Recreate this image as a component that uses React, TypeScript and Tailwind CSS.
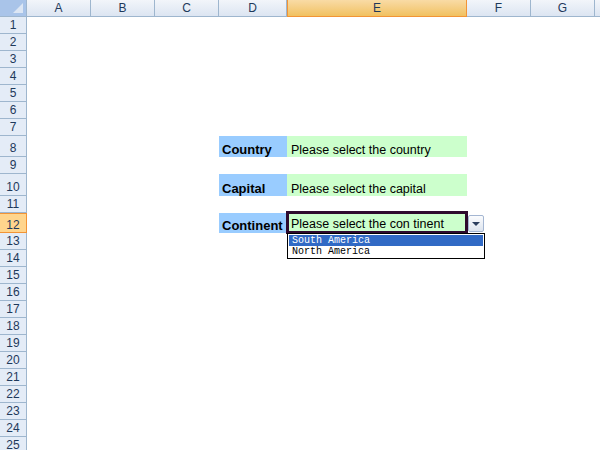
import React from 'react';

const cols = ['A', 'B', 'C', 'D', 'E', 'F', 'G', ''];
const colWidths = [64, 64, 64, 68, 180, 64, 64, 64];
const rowHeights: Record<number, number> = { 8: 21, 10: 22, 12: 20 };
const rows = Array.from({ length: 26 }, (_, i) => i + 1);

function LabelCell({ text }: { text: string }) {
  return (
    <div className="flex h-full items-end bg-[#99CCFF] pb-[1px] pl-[3px] text-[13px] font-bold leading-none text-black">
      {text}
    </div>
  );
}

function ValueCell({ text }: { text: string }) {
  return (
    <div className="flex h-full items-end bg-[#CCFFCC] pb-[1px] pl-[4px] text-[12.5px] leading-none text-black">
      {text}
    </div>
  );
}

export default function App() {
  return (
    <div
      className="relative h-[450px] w-[600px] overflow-hidden bg-white"
      style={{ fontFamily: '"Liberation Sans", Tahoma, sans-serif' }}
    >
      {/* Column header */}
      <div className="flex h-[17px]">
        <div className="relative w-[27px] shrink-0 border-r border-b border-[#9EB6CE] bg-[#A9C4E9]">
          <svg className="absolute right-[3px] bottom-[3px]" width="10" height="10" viewBox="0 0 10 10">
            <polygon points="10,0 10,10 0,10" fill="#DCE6F4" />
          </svg>
        </div>
        {cols.map((c, i) => (
          <div
            key={i}
            style={{ width: colWidths[i] }}
            className={
              c === 'E'
                ? 'flex shrink-0 items-center justify-center border-x border-b border-[#F29436] bg-gradient-to-b from-[#F9DBA5] to-[#F1C15F] text-[12px] text-[#1E395B]'
                : 'flex shrink-0 items-center justify-center border-r border-b border-[#9EB6CE] bg-gradient-to-b from-[#F2F5FA] to-[#DCE5F2] text-[12px] text-[#1E395B]'
            }
          >
            {c}
          </div>
        ))}
      </div>

      {/* Rows */}
      {rows.map((r) => (
        <div key={r} className="flex" style={{ height: rowHeights[r] ?? 17 }}>
          <div
            className={
              r === 12
                ? 'flex w-[27px] shrink-0 items-end justify-center border-y border-r border-[#F29436] bg-[#FFD58D] pb-[1px] text-[12px] leading-none text-[#1E395B]'
                : 'flex w-[27px] shrink-0 items-end justify-center border-r border-b border-[#9EB6CE] bg-[#E4ECF7] pb-[2px] text-[12px] leading-none text-[#1E395B]'
            }
          >
            {r}
          </div>
          <div className="w-[192px] shrink-0" />
          <div className="w-[68px] shrink-0">
            {r === 8 && <LabelCell text="Country" />}
            {r === 10 && <LabelCell text="Capital" />}
            {r === 12 && <LabelCell text="Continent" />}
          </div>
          <div className="w-[180px] shrink-0">
            {r === 8 && <ValueCell text="Please select the country" />}
            {r === 10 && <ValueCell text="Please select the capital" />}
            {r === 12 && (
              <div className="-mx-[1px] -mt-[2px] flex h-[23px] items-end border-[3px] border-[#2E0A2E] bg-[#CCFFCC] pb-[1px] pl-[2px] text-[12.5px] leading-none text-black">
                Please select the con tinent
              </div>
            )}
          </div>
        </div>
      ))}

      {/* Dropdown button */}
      <div className="absolute top-[215px] left-[468px] flex h-[17px] w-[16px] items-center justify-center rounded-[2px] border border-[#A4B6D2] bg-gradient-to-b from-[#FBFCFE] to-[#DDE4EE]">
        <div className="mt-[1px] h-0 w-0 border-x-[4px] border-t-[4px] border-x-transparent border-t-[#2B3E5E]" />
      </div>

      {/* Dropdown list */}
      <div
        className="absolute top-[233px] left-[287px] flex h-[26px] w-[198px] flex-col border border-black bg-white p-[1px] text-[10px] leading-[12px]"
        style={{ fontFamily: '"Liberation Mono", "Courier New", monospace' }}
      >
        <div className="h-[11px] bg-[#316AC5] pl-[3px] text-white">South America</div>
        <div className="h-[11px] pl-[3px] text-black">North America</div>
      </div>
    </div>
  );
}
